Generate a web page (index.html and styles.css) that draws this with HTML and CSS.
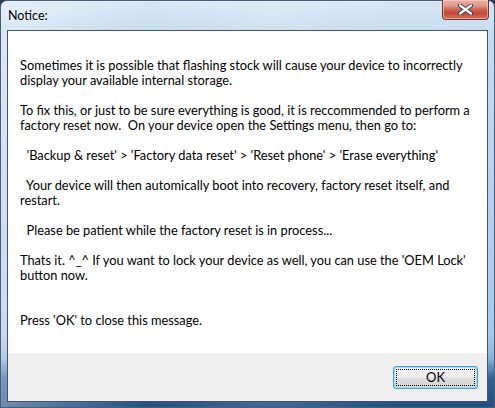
FILE: index.html
```html
<!DOCTYPE html>
<html>
<head>
<meta charset="utf-8">
<link rel="stylesheet" href="styles.css">
</head>
<body>
<div class="window">
  <div class="titlebar">
    <span class="title">Notice:</span>
    <div class="close">
      <svg width="17" height="11" viewBox="0 0 17 11">
        <path d="M3 1.5 L14 9.5 M14 1.5 L3 9.5" stroke="#3a3f48" stroke-width="4.2" stroke-linecap="round"/>
        <path d="M3 1.5 L14 9.5 M14 1.5 L3 9.5" stroke="#ffffff" stroke-width="2.2" stroke-linecap="round"/>
      </svg>
    </div>
  </div>
  <div class="client">
    <div class="message">
      <p>Sometimes it is possible that flashing stock will cause your device to incorrectly<br>display your available internal storage.</p>
      <p>To fix this, or just to be sure everything is good, it is reccommended to perform a<br>factory reset now.&nbsp; On your device open the Settings menu, then go to:</p>
      <p>&nbsp;&nbsp;'Backup &amp; reset' &gt; 'Factory data reset' &gt; 'Reset phone' &gt; 'Erase everything'</p>
      <p>&nbsp;&nbsp;Your device will then automically boot into recovery, factory reset itself, and<br>restart.</p>
      <p>&nbsp;&nbsp;Please be patient while the factory reset is in process...</p>
      <p>Thats it. ^_^ If you want to lock your device as well, you can use the 'OEM Lock'<br>button now.</p>
      <p class="gap2">Press 'OK' to close this message.</p>
    </div>
    <div class="footer">
      <button class="ok"><span class="focus">OK</span></button>
    </div>
  </div>
</div>
</body>
</html>
```
FILE: styles.css
```css
html, body {
  margin: 0;
  padding: 0;
  width: 495px;
  height: 408px;
  overflow: hidden;
  background: #2a3b52;
}
.window {
  position: relative;
  width: 495px;
  height: 408px;
  box-sizing: border-box;
  border: 1px solid #4b5e78;
  border-radius: 7px 7px 0 0;
  background:
    linear-gradient(90deg, rgba(255,255,255,0.35) 0%, rgba(255,255,255,0) 30%, rgba(255,255,255,0.15) 55%, rgba(255,255,255,0) 80%),
    linear-gradient(180deg, #d9e7f6 0%, #c6dbf1 8%, #bad3ee 40%, #a9c8ea 82%, #8cb1dc 88%, #2f5f96 93%, #244e80 100%);
  display: flex;
  flex-direction: column;
  padding: 0 6px 5px 6px;
  font-family: "Lato", "Noto Sans", sans-serif;
  font-size: 12.8px;
  color: #000;
}
.titlebar {
  height: 29px;
  display: flex;
  align-items: center;
  flex-shrink: 0;
}
.title {
  padding-left: 1px;
  margin-top: -1px;
  font-size: 12.5px;
  color: #000;
  text-shadow: 0 0 6px rgba(255,255,255,0.9);
}
.close {
  position: absolute;
  top: -1px;
  right: 5px;
  width: 47px;
  height: 20px;
  box-sizing: border-box;
  border: 1px solid #6d3a34;
  border-top: none;
  border-radius: 0 0 4px 4px;
  background: linear-gradient(180deg, #eab0a3 0%, #e0998b 30%, #cf6552 50%, #c2473a 70%, #d6735f 100%);
  box-shadow: inset 0 0 0 1px rgba(255,220,210,0.5);
  display: flex;
  align-items: center;
  justify-content: center;
}
.client {
  flex: 1;
  display: flex;
  flex-direction: column;
  border: 1px solid #44546a;
  background: #ffffff;
}
.message {
  flex: 1;
  padding: 27px 12px 0 12px;
  line-height: 15px;
  white-space: nowrap;
}
.message p {
  margin: 0 0 15px 0;
}
.message p.gap2 {
  margin-top: 30px;
}
.footer {
  height: 48px;
  background: #f0f0f0;
  display: flex;
  justify-content: flex-end;
  align-items: flex-start;
  padding: 13px 9px 0 0;
  box-sizing: border-box;
}
.ok {
  width: 85px;
  height: 23px;
  padding: 2px;
  box-sizing: border-box;
  border: 1px solid #3c9fd6;
  border-radius: 3px;
  background: linear-gradient(180deg, #f3f3f3 0%, #ececec 48%, #dedede 52%, #d2d2d2 100%);
  box-shadow: inset 0 0 0 1px #9fe0f8;
  font-family: "Lato", "Noto Sans", sans-serif;
  font-size: 13px;
  color: #000;
  display: flex;
}
.focus {
  flex: 1;
  border: 1px dotted #000;
  display: flex;
  align-items: center;
  justify-content: center;
  line-height: 1;
}
```
